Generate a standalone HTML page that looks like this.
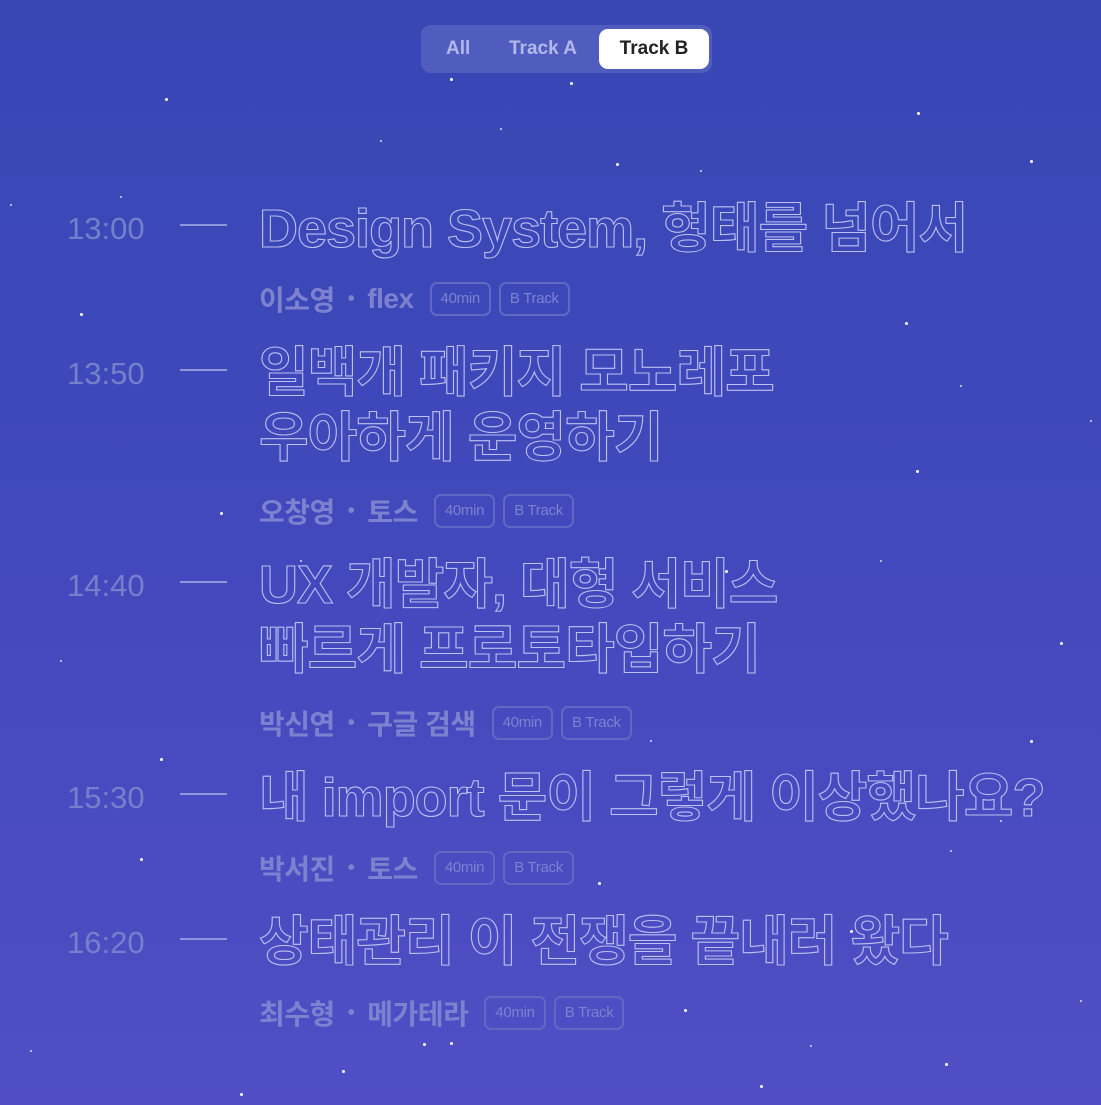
<!DOCTYPE html>
<html><head><meta charset="utf-8"><style>
html,body{margin:0;padding:0}
body{width:1101px;height:1105px;overflow:hidden;position:relative;background:linear-gradient(180deg,#3747b4 0%,#4249bc 50%,#514ec4 100%);font-family:"Liberation Sans","Noto Sans CJK KR",sans-serif}
.tabs{position:absolute;left:421px;top:25px;width:291px;height:48px;border-radius:10px;background:rgba(255,255,255,0.12)}
.tab{position:absolute;top:4px;height:40px;line-height:40px;font-size:19px;font-weight:bold;color:rgba(220,222,255,0.7)}
.tab.on{background:#fff;color:#222;border-radius:9px;left:178px;width:110px;text-align:center}
.time{position:absolute;left:67px;font-size:31px;color:#7580cc;line-height:40px}
.dash{position:absolute;left:180px;width:47px;height:2px;background:#8f96dc}
.title{position:absolute;left:259px;font-size:54px;font-weight:bold;line-height:65px;letter-spacing:-1px;color:transparent;-webkit-text-stroke:1.1px #bcc0f2;white-space:nowrap;font-family:"Liberation Sans","Noto Sans CJK KR",sans-serif}
.meta{position:absolute;left:259px;height:34px;display:flex;align-items:center;font-size:28px;font-weight:bold;color:#7c82d0;white-space:nowrap;letter-spacing:-0.5px}
.dot{margin:0 13px;font-size:20px}
.b{display:inline-block;height:30px;line-height:30px;padding:0 9px;border:2px solid #6168c4;border-radius:7px;font-size:15px;font-weight:normal;margin-left:8px;letter-spacing:-0.3px}
.b1{margin-left:16px}
.s{position:absolute;width:3px;height:3px;border-radius:50%;background:#fff}
.s2{position:absolute;width:2px;height:2px;background:rgba(255,255,255,.6)}
</style></head><body>
<div class="tabs">
<div class="tab" style="left:25px">All</div>
<div class="tab" style="left:88px">Track A</div>
<div class="tab on">Track B</div>
</div>

<div class="time" style="top:209px">13:00</div><div class="dash" style="top:224px"></div>
<div class="title" style="top:197px">Design System, 형태를 넘어서</div>
<div class="meta" style="top:282px">이소영<span class="dot">•</span>flex<span class="b b1">40min</span><span class="b">B Track</span></div>

<div class="time" style="top:354px">13:50</div><div class="dash" style="top:369px"></div>
<div class="title" style="top:341px">일백개 패키지 모노레포<br>우아하게 운영하기</div>
<div class="meta" style="top:494px">오창영<span class="dot">•</span>토스<span class="b b1">40min</span><span class="b">B Track</span></div>

<div class="time" style="top:566px">14:40</div><div class="dash" style="top:581px"></div>
<div class="title" style="top:553px">UX 개발자, 대형 서비스<br>빠르게 프로토타입하기</div>
<div class="meta" style="top:706px">박신연<span class="dot">•</span>구글 검색<span class="b b1">40min</span><span class="b">B Track</span></div>

<div class="time" style="top:778px">15:30</div><div class="dash" style="top:793px"></div>
<div class="title" style="top:766px">내 import 문이 그렇게 이상했나요?</div>
<div class="meta" style="top:851px">박서진<span class="dot">•</span>토스<span class="b b1">40min</span><span class="b">B Track</span></div>

<div class="time" style="top:923px">16:20</div><div class="dash" style="top:938px"></div>
<div class="title" style="top:910px">상태관리 이 전쟁을 끝내러 왔다</div>
<div class="meta" style="top:996px">최수형<span class="dot">•</span>메가테라<span class="b b1">40min</span><span class="b">B Track</span></div>

<div class="s" style="left:450px;top:78px"></div><div class="s" style="left:570px;top:82px"></div>
<div class="s" style="left:917px;top:112px"></div><div class="s" style="left:616px;top:163px"></div>
<div class="s" style="left:165px;top:98px"></div><div class="s" style="left:1030px;top:160px"></div>
<div class="s" style="left:905px;top:322px"></div><div class="s" style="left:80px;top:313px"></div>
<div class="s" style="left:220px;top:512px"></div><div class="s" style="left:725px;top:570px"></div>
<div class="s" style="left:916px;top:470px"></div><div class="s" style="left:1060px;top:642px"></div>
<div class="s" style="left:140px;top:858px"></div><div class="s" style="left:598px;top:882px"></div>
<div class="s" style="left:423px;top:1043px"></div><div class="s" style="left:450px;top:1042px"></div>
<div class="s" style="left:342px;top:1070px"></div><div class="s" style="left:240px;top:1093px"></div>
<div class="s" style="left:684px;top:1009px"></div><div class="s" style="left:945px;top:1063px"></div>
<div class="s" style="left:1030px;top:740px"></div><div class="s" style="left:160px;top:758px"></div>
<div class="s" style="left:760px;top:1085px"></div><div class="s" style="left:850px;top:930px"></div>
<div class="s2" style="left:500px;top:128px"></div><div class="s2" style="left:380px;top:140px"></div>
<div class="s2" style="left:700px;top:170px"></div><div class="s2" style="left:10px;top:204px"></div>
<div class="s2" style="left:120px;top:196px"></div><div class="s2" style="left:960px;top:385px"></div>
<div class="s2" style="left:880px;top:560px"></div><div class="s2" style="left:60px;top:660px"></div>
<div class="s2" style="left:300px;top:560px"></div><div class="s2" style="left:1000px;top:820px"></div>
<div class="s2" style="left:950px;top:850px"></div><div class="s2" style="left:30px;top:1050px"></div>
<div class="s2" style="left:810px;top:1045px"></div><div class="s2" style="left:1080px;top:1000px"></div>
<div class="s2" style="left:650px;top:740px"></div><div class="s2" style="left:1090px;top:420px"></div>
</body></html>
